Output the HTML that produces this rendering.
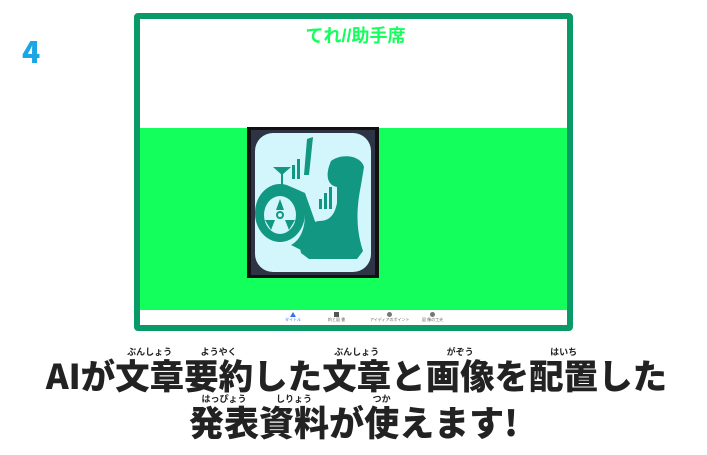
<!DOCTYPE html>
<html><head><meta charset="utf-8"><style>
html,body{margin:0;padding:0;background:#fff;width:707px;height:455px;overflow:hidden;position:relative;font-family:"Liberation Sans","Noto Sans CJK JP",sans-serif}
.four{position:absolute;left:22px;top:32px;font-size:30px;font-weight:900;color:#1aa6e6;font-family:"Noto Sans CJK JP",sans-serif;line-height:1.2}
.frame{position:absolute;left:134px;top:13px;width:427px;height:306px;border:6px solid #0a9a68;border-radius:4px;background:#fff}
.title{position:absolute;left:0;width:100%;top:3px;text-align:center;color:#13ff5c;font-weight:bold;font-size:18px;padding-left:4px;box-sizing:border-box}
.green{position:absolute;left:0;top:109px;width:100%;height:182px;background:#13ff5c}
.nav{position:absolute;left:0;top:291px;width:100%;height:15px;background:#fff}
.ni{position:absolute;top:2px;font-size:4px;color:#666;text-align:center}
.icon{position:absolute;left:107px;top:108px;width:132px;height:151px;background:#111}
.lines{position:absolute;left:0;width:707px;text-align:center;color:#222;font-weight:900;font-family:"Noto Sans CJK JP",sans-serif;white-space:nowrap;line-height:1}
.r{position:relative;display:inline-block}
.r i{position:absolute;left:-20px;right:-20px;top:-10px;font-style:normal;font-size:9px;font-weight:bold;text-align:center;line-height:1}
</style></head><body>
<div class="four">4</div>
<div class="frame">
 <div class="title">てれ//助手席</div>
 <div class="green"></div>
 <div class="icon">
  <svg width="132" height="151" viewBox="0 0 132 151">
   <rect x="4" y="3" width="124" height="145" fill="#2e3446"/>
   <rect x="8" y="6" width="116" height="139" rx="18" fill="#d2f6fb"/>
   <g fill="#119782">
    <path d="M84 34 C94 26 114 28 117 40 L114 58 C110 78 108 100 116 124 L110 132 L62 132 L54 126 C50 110 58 96 72 94 C84 94 88 86 90 76 L90 60 C80 58 78 48 84 34 Z"/>
    <ellipse cx="33" cy="86" rx="25" ry="29"/>
    <path d="M40 58 C62 66 64 108 44 118 L60 126 L70 100 L58 66 Z"/>
    <path d="M60 12 L66 10 L62 48 L57 48 Z"/>
    <rect x="45" y="38" width="3" height="14"/><rect x="50" y="32" width="3" height="20"/>
    <rect x="72" y="72" width="3" height="10"/><rect x="77" y="66" width="3" height="16"/><rect x="82" y="60" width="3" height="22"/>
    <path d="M26 40 L44 40 L35 48 Z M34 46 L36 46 L36 60 L34 60 Z"/>
   </g>
   <ellipse cx="33" cy="88" rx="16" ry="19" fill="#d2f6fb"/>
   <g fill="#119782"><circle cx="33" cy="88" r="4"/><path d="M33 72 L37 83 L29 83 Z M48 93 L38 93 L42 103 Z M18 93 L28 93 L24 103 Z"/></g>
   <circle cx="33" cy="88" r="2" fill="#d2f6fb"/>
  </svg>
 </div>
 <div class="nav">
  <div class="ni" style="left:145px;color:#3a6ff0"><div style="width:0;height:0;margin:0 auto;border-left:3px solid transparent;border-right:3px solid transparent;border-bottom:5px solid #3a6ff0"></div>タイトル</div>
  <div class="ni" style="left:188px"><div style="width:5px;height:5px;background:#555;margin:0 auto"></div>約と図 書</div>
  <div class="ni" style="left:230px"><div style="width:5px;height:5px;border-radius:50%;background:#777;margin:0 auto"></div>アイディアのポイント</div>
  <div class="ni" style="left:282px"><div style="width:5px;height:5px;border-radius:50%;background:#777;margin:0 auto"></div>図 像の工夫</div>
 </div>
</div>
<div class="lines" style="top:357px;font-size:34.5px;padding-left:6px;box-sizing:border-box">AIが<span class="r"><i>ぶんしょう</i>文章</span><span class="r"><i>ようやく</i>要約</span>した<span class="r"><i>ぶんしょう</i>文章</span>と<span class="r"><i>がぞう</i>画像</span>を<span class="r"><i>はいち</i>配置</span>した</div>
<div class="lines" style="top:404px;font-size:35px"><span class="r"><i>はっぴょう</i>発表</span><span class="r"><i>しりょう</i>資料</span>が<span class="r"><i>つか</i>使</span>えます!</div>
</body></html>
